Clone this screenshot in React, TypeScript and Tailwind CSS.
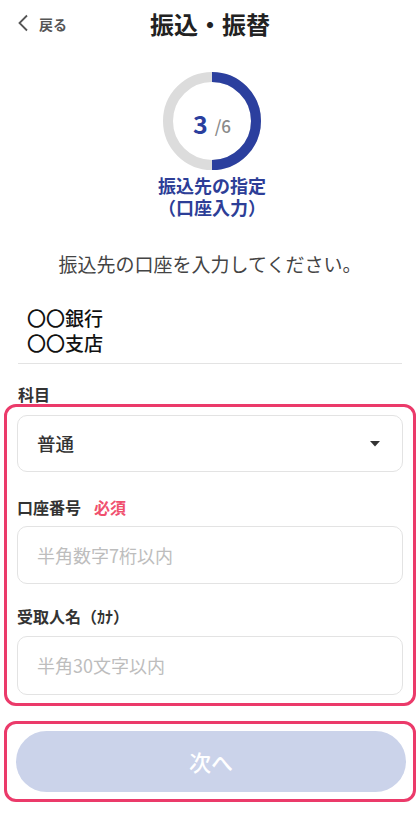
import React from "react";

export default function App() {
  const font = { fontFamily: '"Noto Sans CJK JP", "Noto Sans", sans-serif' };
  return (
    <div className="w-[420px] h-[840px] bg-white text-[#222]" style={font}>
      {/* Header */}
      <div className="relative h-[46px] flex items-center justify-center">
        <div className="absolute left-[17px] top-[13px] flex items-center gap-[10px]">
          <svg width="12" height="18" viewBox="0 0 12 18" fill="none">
            <polyline points="10,1.5 2.5,9 10,16.5" stroke="#555" strokeWidth="1.8" fill="none" />
          </svg>
          <span className="text-[14px] font-bold text-[#555] leading-[18px] mt-[2px]">戻る</span>
        </div>
        <h1 className="text-[24px] font-bold leading-[30px] text-[#222] mt-[1px]">振込・振替</h1>
      </div>

      {/* Progress circle */}
      <div className="mt-[26px] flex justify-center">
        <div className="relative w-[98px] h-[98px] ml-[4px]">
          <svg width="98" height="98" viewBox="0 0 98 98">
            <circle cx="49" cy="49" r="44" fill="none" stroke="#dcdcdc" strokeWidth="10" />
            <path d="M49 5 A44 44 0 0 1 49 93" fill="none" stroke="#2b3f9e" strokeWidth="10" />
          </svg>
          <div className="absolute inset-0 flex items-center justify-center pt-[4px]">
            <span className="text-[25px] font-bold text-[#2b3f9e] leading-none">3</span>
            <span className="text-[17px] font-medium text-[#8a8a8a] leading-none ml-[7px] mt-[5px]">/6</span>
          </div>
        </div>
      </div>

      <p className="mt-[4px] text-center text-[18px] font-bold leading-[22px] text-[#2d3e97] ml-[4px]">
        振込先の指定
        <br />
        （口座入力）
      </p>

      <p className="mt-[33px] text-center text-[19px] leading-[26px] text-[#444]">
        振込先の口座を入力してください。
      </p>

      <p className="mt-[28px] px-[27px] text-[19px] leading-[25px] font-medium text-[#111]">
        〇〇銀行
        <br />
        〇〇支店
      </p>

      <div className="mt-[8px] mx-[18px] h-px bg-[#e3e3e3]" />

      <div className="mt-[20px] px-[18px] text-[16px] font-bold leading-[20px] text-[#333]">科目</div>

      {/* Form box */}
      <div className="mx-[4px] w-[412px] border-[3px] border-[#eb3a6a] rounded-[12px] pt-[8px] pb-[8px] px-[10px]">
        <div className="h-[57px] border border-[#e3e3e3] rounded-[10px] flex items-center justify-between pl-[19px] pr-[22px]">
          <span className="text-[18.5px] font-medium text-[#333]">普通</span>
          <svg width="10" height="6" viewBox="0 0 10 6">
            <polygon points="0,0 10,0 5,5.5" fill="#333" />
          </svg>
        </div>

        <div className="mt-[25px] flex items-center gap-[13px] text-[16px] font-bold leading-[20px]">
          <span className="text-[#333]">口座番号</span>
          <span className="text-[#f0506e]">必須</span>
        </div>
        <div className="mt-[9px] h-[58px] border border-[#e3e3e3] rounded-[10px] flex items-center pl-[19px]">
          <span className="text-[18px] text-[#bdbdbd]">半角数字7桁以内</span>
        </div>

        <div className="mt-[22px] text-[16px] font-bold leading-[20px] text-[#333]">受取人名（ｶﾅ）</div>
        <div className="mt-[10px] h-[59px] border border-[#e3e3e3] rounded-[10px] flex items-center pl-[19px]">
          <span className="text-[18px] text-[#bdbdbd]">半角30文字以内</span>
        </div>
      </div>

      {/* Button box */}
      <div className="mt-[15px] mx-[4px] w-[412px] border-[3px] border-[#eb3a6a] rounded-[12px] py-[7px] pl-[9px] pr-[7px]">
        <div className="h-[61px] rounded-full bg-[#cbd3ea] flex items-center justify-center">
          <span className="text-[22px] font-medium text-white">次へ</span>
        </div>
      </div>
    </div>
  );
}
